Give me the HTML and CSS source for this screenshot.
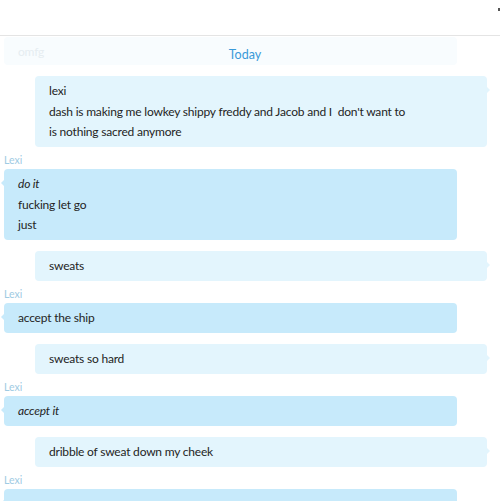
FILE: index.html
```html
<!DOCTYPE html>
<html lang="en">
<head>
    <meta charset="UTF-8">
    <meta name="viewport" content="width=device-width, initial-scale=1.0">
    <title>Chat</title>
    <link rel="stylesheet" href="styles.css">
</head>
<body>
    <div class="header">
        <span class="header-icon"></span>
    </div>
    <div class="conversation">
        <div class="faded">
            <div class="bubble received ghost">omfg</div>
            <div class="day-divider">Today</div>
        </div>

        <div class="bubble sent">
            <div>lexi</div>
            <div>dash is making me lowkey shippy freddy and Jacob and I&nbsp; don't want to</div>
            <div>is nothing sacred anymore</div>
        </div>

        <div class="sender">Lexi</div>
        <div class="bubble received">
            <div><em>do it</em></div>
            <div>fucking let go</div>
            <div>just</div>
        </div>

        <div class="bubble sent">sweats</div>

        <div class="sender">Lexi</div>
        <div class="bubble received">accept the ship</div>

        <div class="bubble sent">sweats so hard</div>

        <div class="sender">Lexi</div>
        <div class="bubble received"><em>accept it</em></div>

        <div class="bubble sent">dribble of sweat down my cheek</div>

        <div class="sender">Lexi</div>
        <div class="bubble received">&nbsp;</div>
    </div>
</body>
</html>
```

FILE: styles.css
```css
/* Page */
body {
    margin: 0;
    height: 501px;
    overflow: hidden;
    font-family: Lato, "Open Sans", sans-serif;
    font-size: 12px;
    letter-spacing: -0.2px;
    color: #242424;
    background: #fff;
}

/* Top bar */
.header {
    height: 35px;
    border-bottom: 1px solid #e4e4e4;
    position: relative;
}

.header-icon {
    position: absolute;
    top: 8px;
    right: 0;
    width: 2px;
    height: 3px;
    background: #555;
}

/* Message list */
.conversation {
    width: 490px;
    height: 465px;
    overflow: hidden;
    padding-top: 1px;
}

.faded {
    position: relative;
}

.day-divider {
    position: absolute;
    left: 0;
    right: 0;
    top: 10px;
    text-align: center;
    color: #3a9ad9;
    font-size: 12.5px;
    line-height: 16px;
    letter-spacing: 0;
}

/* Bubbles */
.bubble {
    position: relative;
    padding: 5px 14px 4.5px;
    line-height: 20.5px;
    border-radius: 4px;
    margin-bottom: 11px;
}

.bubble em {
    font-style: italic;
}

.sent {
    background-color: #e3f5fd;
    margin-left: 35px;
    margin-right: 3px;
}

.sent::after {
    content: "";
    position: absolute;
    top: 11px;
    right: -3px;
    border-top: 3px solid transparent;
    border-bottom: 3px solid transparent;
    border-left: 3px solid #e3f5fd;
}

.received {
    background-color: #c7eafb;
    margin-left: 4px;
    margin-right: 33px;
}

.received::before {
    content: "";
    position: absolute;
    top: 11px;
    left: -3px;
    border-top: 3px solid transparent;
    border-bottom: 3px solid transparent;
    border-right: 3px solid #c7eafb;
}

.ghost {
    background-color: #f8fcfe;
    color: #e6edf1;
    line-height: 19px;
    padding: 4.5px 14px;
}

.ghost::before {
    display: none;
}

/* Sender name */
.sender {
    font-size: 10.5px;
    line-height: 12px;
    letter-spacing: 0;
    color: #9fcbe3;
    margin: -4px 0 3px 4px;
}
```
